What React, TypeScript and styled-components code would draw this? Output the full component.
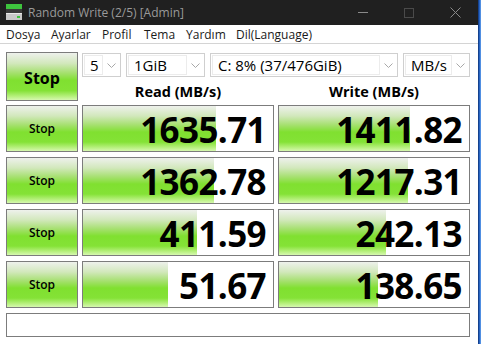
import React from 'react';

import styled, { createGlobalStyle } from 'styled-components';

const BorderGrey = '#7c7c7c';
const TitleDark = '#202020';
const UiFont = `'Open Sans', 'Noto Sans', sans-serif`;

const greenFace = `linear-gradient(to bottom, #eef1ec 0%, #d2e8bc 22%, #a6e070 42%, #80e030 58%, #84e236 80%, #b6f07c 92%, #d6f8b0 100%)`;

const GlobalStyle = createGlobalStyle`
  html, body {
    margin: 0;
    padding: 0;
    background: #fff;
    overflow: hidden;
  }
`;

const Window = styled.div`
  width: 481px;
  height: 344px;
  display: flex;
  background: #fff;
  font-family: ${UiFont};
  color: #000;
`;

const Frame = styled.div`
  flex: 1;
  display: flex;
  flex-direction: column;
  min-width: 0;
`;

const EdgeStrip = styled.div`
  width: 3px;
  background: linear-gradient(to right, #0b2f74, #2d6fd0 60%, #6aa6ee);
`;

const TitleBar = styled.div`
  height: 25px;
  background: ${TitleDark};
  display: flex;
  align-items: center;
  padding-left: 6px;
`;

const TitleText = styled.span`
  margin-left: 6px;
  font-size: 12px;
  color: #9a9a9a;
  flex: 1;
`;

const WinButtons = styled.div`
  display: flex;
  align-items: center;
  height: 100%;
`;

const WinButton = styled.div`
  width: 46px;
  height: 100%;
  display: flex;
  align-items: center;
  justify-content: center;
`;

const MenuBar = styled.div`
  height: 18px;
  display: flex;
  align-items: center;
  gap: 0;
  padding-left: 6px;
  border-bottom: 1px solid #d4d4d4;
  font-size: 12px;
  color: #1a1a1a;
`;

const MenuItem = styled.span<{ $w: number }>`
  width: ${(p) => p.$w}px;
`;

const Body = styled.div`
  padding: 8px 0 0 6px;
  display: flex;
  flex-direction: column;
  gap: 4px;
`;

const TopSection = styled.div`
  display: flex;
  gap: 4px;
  height: 49px;
`;

const StopButton = styled.div<{ $big?: boolean }>`
  width: 72px;
  box-sizing: border-box;
  border: 1px solid ${BorderGrey};
  background: ${greenFace};
  display: flex;
  align-items: center;
  justify-content: center;
  font-weight: ${(p) => (p.$big ? 700 : 600)};
  font-size: ${(p) => (p.$big ? '16px' : '12px')};
  padding-top: ${(p) => (p.$big ? '2px' : '0')};
`;

const ControlsColumn = styled.div`
  width: 388px;
  display: flex;
  flex-direction: column;
`;

const ComboRow = styled.div`
  display: flex;
  gap: 5px;
  height: 24px;
  margin-top: 1px;
`;

const Combo = styled.div<{ $w: number }>`
  width: ${(p) => p.$w}px;
  box-sizing: border-box;
  border: 1px solid #cfcfcf;
  display: flex;
  align-items: stretch;
  background: #fff;
`;

const ComboText = styled.div`
  flex: 1;
  margin: 1px 0 1px 1px;
  border: 1px solid #ececec;
  padding-left: 5px;
  font-size: 15px;
  line-height: 19px;
  white-space: nowrap;
  overflow: hidden;
`;

const ComboArrow = styled.div`
  width: 17px;
  display: flex;
  align-items: center;
  justify-content: center;
`;

const HeaderRow = styled.div`
  display: grid;
  grid-template-columns: 192px 192px;
  column-gap: 4px;
  flex: 1;
  align-items: center;
`;

const HeaderLabel = styled.div`
  text-align: center;
  font-weight: 700;
  font-size: 14.5px;
  padding-top: 5px;
`;

const ResultGrid = styled.div`
  display: grid;
  grid-template-columns: 72px 192px 192px;
  grid-auto-rows: 47px;
  column-gap: 4px;
  row-gap: 5px;
`;

const ResultCell = styled.div`
  box-sizing: border-box;
  border: 1px solid ${BorderGrey};
  background-color: #fff;
  background-image: ${greenFace};
  background-repeat: no-repeat;
  display: flex;
  align-items: center;
  justify-content: flex-end;
  padding: 2px 7px 0 0;
  font-weight: 700;
  font-size: 35px;
  letter-spacing: -0.6px;
  line-height: 1;
`;

const StatusBox = styled.div`
  margin-top: 1px;
  width: 464px;
  height: 24px;
  box-sizing: border-box;
  border: 1px solid ${BorderGrey};
`;

const rows = [
  { read: '1635.71', readFill: 133, write: '1411.82', writeFill: 131 },
  { read: '1362.78', readFill: 131, write: '1217.31', writeFill: 129 },
  { read: '411.59', readFill: 114, write: '242.13', writeFill: 107 },
  { read: '51.67', readFill: 85, write: '138.65', writeFill: 99 },
];

const menu = [
  { label: 'Dosya', w: 45 },
  { label: 'Ayarlar', w: 51 },
  { label: 'Profil', w: 42 },
  { label: 'Tema', w: 42 },
  { label: 'Yardım', w: 50 },
  { label: 'Dil(Language)', w: 100 },
];

const combos = [
  { label: '5', w: 39 },
  { label: '1GiB', w: 79 },
  { label: 'C: 8% (37/476GiB)', w: 188 },
  { label: 'MB/s', w: 67 },
];

function AppIcon() {
  return (
    <svg width='16' height='17' viewBox='0 0 16 17'>
      <rect x='0' y='0' width='16' height='5' fill='#3ec43e' />
      <rect x='0' y='5' width='16' height='4' fill='#3a3a3a' />
      <rect x='0' y='9' width='16' height='7' fill='#c8c8c8' />
      <rect x='0' y='9' width='16' height='1' fill='#e8e8e8' />
      <rect x='11' y='12' width='3' height='2' fill='#3ec43e' />
    </svg>
  );
}

function Chevron() {
  return (
    <svg width='9' height='5' viewBox='0 0 9 5'>
      <polyline points='0.5,0.5 4.5,4.5 8.5,0.5' fill='none' stroke='#a8a8a8' strokeWidth='1' />
    </svg>
  );
}

export function App() {
  return (
    <Window>
      <GlobalStyle />
      <Frame>
        <TitleBar>
          <AppIcon />
          <TitleText>Random Write (2/5) [Admin]</TitleText>
          <WinButtons>
            <WinButton>
              <svg width='10' height='1' viewBox='0 0 10 1'>
                <rect width='10' height='1' fill='#8a8a8a' />
              </svg>
            </WinButton>
            <WinButton>
              <svg width='10' height='10' viewBox='0 0 10 10'>
                <rect x='0.5' y='0.5' width='9' height='9' fill='none' stroke='#4a4a4a' />
              </svg>
            </WinButton>
            <WinButton>
              <svg width='11' height='11' viewBox='0 0 11 11'>
                <path d='M0.5 0.5 L10.5 10.5 M10.5 0.5 L0.5 10.5' stroke='#8a8a8a' strokeWidth='1' />
              </svg>
            </WinButton>
          </WinButtons>
        </TitleBar>
        <MenuBar>
          {menu.map((m) => (
            <MenuItem key={m.label} $w={m.w}>{m.label}</MenuItem>
          ))}
        </MenuBar>
        <Body>
          <TopSection>
            <StopButton $big>Stop</StopButton>
            <ControlsColumn>
              <ComboRow>
                {combos.map((c) => (
                  <Combo key={c.label} $w={c.w}>
                    <ComboText>{c.label}</ComboText>
                    <ComboArrow><Chevron /></ComboArrow>
                  </Combo>
                ))}
              </ComboRow>
              <HeaderRow>
                <HeaderLabel>Read (MB/s)</HeaderLabel>
                <HeaderLabel>Write (MB/s)</HeaderLabel>
              </HeaderRow>
            </ControlsColumn>
          </TopSection>
          <ResultGrid>
            {rows.map((r) => (
              <React.Fragment key={r.read}>
                <StopButton>Stop</StopButton>
                <ResultCell style={{ backgroundSize: `${r.readFill}px 100%` }}>{r.read}</ResultCell>
                <ResultCell style={{ backgroundSize: `${r.writeFill}px 100%` }}>{r.write}</ResultCell>
              </React.Fragment>
            ))}
          </ResultGrid>
          <StatusBox />
        </Body>
      </Frame>
      <EdgeStrip />
    </Window>
  );
}

export default App;
